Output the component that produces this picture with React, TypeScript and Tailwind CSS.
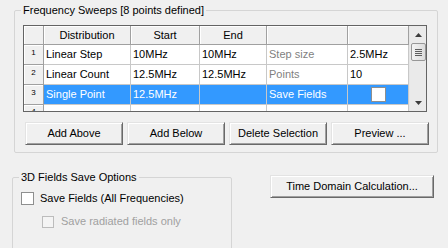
import React from "react";

const font = { fontFamily: '"Liberation Sans", Arial, sans-serif' };

function HeaderCell({ w, children }: { w: string; children?: React.ReactNode }) {
  return (
    <div
      className={`${w} h-full shrink-0 border-r border-b border-[#a0a0a0] bg-[#f0f0f0] shadow-[inset_1px_1px_0_#ffffff] flex items-center justify-center text-black`}
    >
      {children}
    </div>
  );
}

function RowHeader({ n }: { n?: string }) {
  return (
    <div className="w-[20px] h-full shrink-0 border-r border-b border-[#a0a0a0] bg-[#f0f0f0] shadow-[inset_1px_1px_0_#ffffff] flex justify-center">
      <span className="text-[8px] leading-none mt-[4px] text-black">{n}</span>
    </div>
  );
}

function Cell({
  w,
  children,
  gray,
  sel,
}: {
  w: string;
  children?: React.ReactNode;
  gray?: boolean;
  sel?: boolean;
}) {
  return (
    <div
      className={`${w} h-full shrink-0 border-r border-b border-[#c8c8c8] flex items-center pl-[2px] whitespace-nowrap overflow-hidden ${
        sel ? "bg-[#3399ff] text-white" : "bg-white"
      } ${gray && !sel ? "text-[#7f7f7f]" : ""} ${!gray && !sel ? "text-black" : ""}`}
    >
      {children}
    </div>
  );
}

function WinButton({ w, h, children }: { w: string; h: string; children: React.ReactNode }) {
  return (
    <div
      className={`${w} ${h} shrink-0 bg-[#f0f0f0] border-t border-l border-r border-b border-t-[#e3e3e3] border-l-[#e3e3e3] border-r-[#696969] border-b-[#696969] shadow-[inset_1px_1px_0_#ffffff,inset_-1px_-1px_0_#a0a0a0] flex items-center justify-center text-black`}
    >
      {children}
    </div>
  );
}

export default function App() {
  return (
    <div
      className="w-[448px] h-[248px] bg-[#f0f0f0] overflow-hidden flex flex-col text-[11px] leading-[13px]"
      style={font}
    >
      {/* Frequency Sweeps group */}
      <div className="relative ml-[14px] mt-[10px] w-[424px] h-[143px] shrink-0 border border-[#d5d5d5] rounded-[2px] flex flex-col">
        <span className="absolute left-[6px] -top-[7px] bg-[#f0f0f0] px-[2px] text-black">
          Frequency Sweeps [8 points defined]
        </span>
        {/* grid */}
        <div className="ml-[8px] mt-[14px] w-[404px] h-[87px] border border-[#646464] flex bg-white">
          <div className="w-[385px] flex flex-col">
            <div className="flex h-[19px]">
              <HeaderCell w="w-[20px]" />
              <HeaderCell w="w-[87px]">Distribution</HeaderCell>
              <HeaderCell w="w-[69px]">Start</HeaderCell>
              <HeaderCell w="w-[67px]">End</HeaderCell>
              <HeaderCell w="w-[81px]" />
              <HeaderCell w="w-[61px]" />
            </div>
            <div className="flex h-[20px]">
              <RowHeader n="1" />
              <Cell w="w-[87px]">Linear Step</Cell>
              <Cell w="w-[69px]">10MHz</Cell>
              <Cell w="w-[67px]">10MHz</Cell>
              <Cell w="w-[81px]" gray>
                Step size
              </Cell>
              <Cell w="w-[61px]">2.5MHz</Cell>
            </div>
            <div className="flex h-[20px]">
              <RowHeader n="2" />
              <Cell w="w-[87px]">Linear Count</Cell>
              <Cell w="w-[69px]">12.5MHz</Cell>
              <Cell w="w-[67px]">12.5MHz</Cell>
              <Cell w="w-[81px]" gray>
                Points
              </Cell>
              <Cell w="w-[61px]">10</Cell>
            </div>
            <div className="flex h-[20px]">
              <RowHeader n="3" />
              <Cell w="w-[87px]" sel>
                Single Point
              </Cell>
              <Cell w="w-[69px]" sel>
                12.5MHz
              </Cell>
              <Cell w="w-[67px]" sel />
              <Cell w="w-[81px]" sel>
                Save Fields
              </Cell>
              <div className="w-[61px] h-full shrink-0 border-r border-b border-[#c8c8c8] bg-[#3399ff] flex items-center justify-center">
                <div className="w-[15px] h-[15px] bg-white border border-[#8e8f8f]" />
              </div>
            </div>
            <div className="flex h-[6px] overflow-hidden">
              <div className="w-[20px] h-[20px] shrink-0 border-r border-[#a0a0a0] bg-[#f0f0f0] shadow-[inset_1px_1px_0_#ffffff] flex justify-center">
                <span className="text-[8px] leading-none mt-[3px] text-black">4</span>
              </div>
              <div className="w-[87px] h-full shrink-0 border-r border-[#c8c8c8] bg-white" />
              <div className="w-[69px] h-full shrink-0 border-r border-[#c8c8c8] bg-white" />
              <div className="w-[67px] h-full shrink-0 border-r border-[#c8c8c8] bg-white" />
              <div className="w-[81px] h-full shrink-0 border-r border-[#c8c8c8] bg-white" />
              <div className="w-[61px] h-full shrink-0 border-r border-[#c8c8c8] bg-white" />
            </div>
          </div>
          {/* scrollbar */}
          <div className="w-[17px] h-full bg-[#eaeaea] flex flex-col items-center border-l border-[#e6e6e6]">
            <div className="h-[17px] w-full flex items-center justify-center">
              <svg width="7" height="4" viewBox="0 0 7 4">
                <path d="M3.5 0 L7 4 L0 4 Z" fill="#3c3c3c" />
              </svg>
            </div>
            <div className="mt-[0px] w-[15px] h-[18px] rounded-[2px] border border-[#979797] bg-gradient-to-r from-[#f3f3f3] to-[#dcdcdc] flex flex-col items-center justify-center gap-[1px]">
              <div className="w-[7px] h-[1px] bg-[#5e5e5e]" />
              <div className="w-[7px] h-[1px] bg-[#5e5e5e]" />
              <div className="w-[7px] h-[1px] bg-[#5e5e5e]" />
              <div className="w-[7px] h-[1px] bg-[#5e5e5e]" />
            </div>
            <div className="flex-1" />
            <div className="h-[17px] w-full flex items-center justify-center">
              <svg width="7" height="4" viewBox="0 0 7 4">
                <path d="M0 0 L7 0 L3.5 4 Z" fill="#3c3c3c" />
              </svg>
            </div>
          </div>
        </div>
        {/* buttons */}
        <div className="ml-[10px] mt-[10px] flex gap-[4px]">
          <WinButton w="w-[98px]" h="h-[23px]">Add Above</WinButton>
          <WinButton w="w-[98px]" h="h-[23px]">Add Below</WinButton>
          <WinButton w="w-[98px]" h="h-[23px]">Delete Selection</WinButton>
          <WinButton w="w-[98px]" h="h-[23px]">Preview ...</WinButton>
        </div>
      </div>

      {/* bottom row */}
      <div className="mt-[22px] flex items-start">
        <div className="relative ml-[12px] mt-[2px] w-[220px] h-[100px] shrink-0 border border-[#d5d5d5] rounded-[2px] flex flex-col">
          <span className="absolute left-[6px] -top-[7px] bg-[#f0f0f0] px-[2px] text-black">
            3D Fields Save Options
          </span>
          <div className="ml-[8px] mt-[14px] flex items-center gap-[6px]">
            <div className="w-[13px] h-[13px] bg-white border border-[#8e8f8f]" />
            <span className="text-black">Save Fields (All Frequencies)</span>
          </div>
          <div className="ml-[29px] mt-[10px] flex items-center gap-[7px]">
            <div className="w-[12px] h-[12px] bg-[#f4f4f4] border border-[#bcbcbc]" />
            <span className="text-[#a0a0a0]">Save radiated fields only</span>
          </div>
        </div>
        <div className="ml-[38px]">
          <WinButton w="w-[164px]" h="h-[23px]">Time Domain Calculation...</WinButton>
        </div>
      </div>
    </div>
  );
}
